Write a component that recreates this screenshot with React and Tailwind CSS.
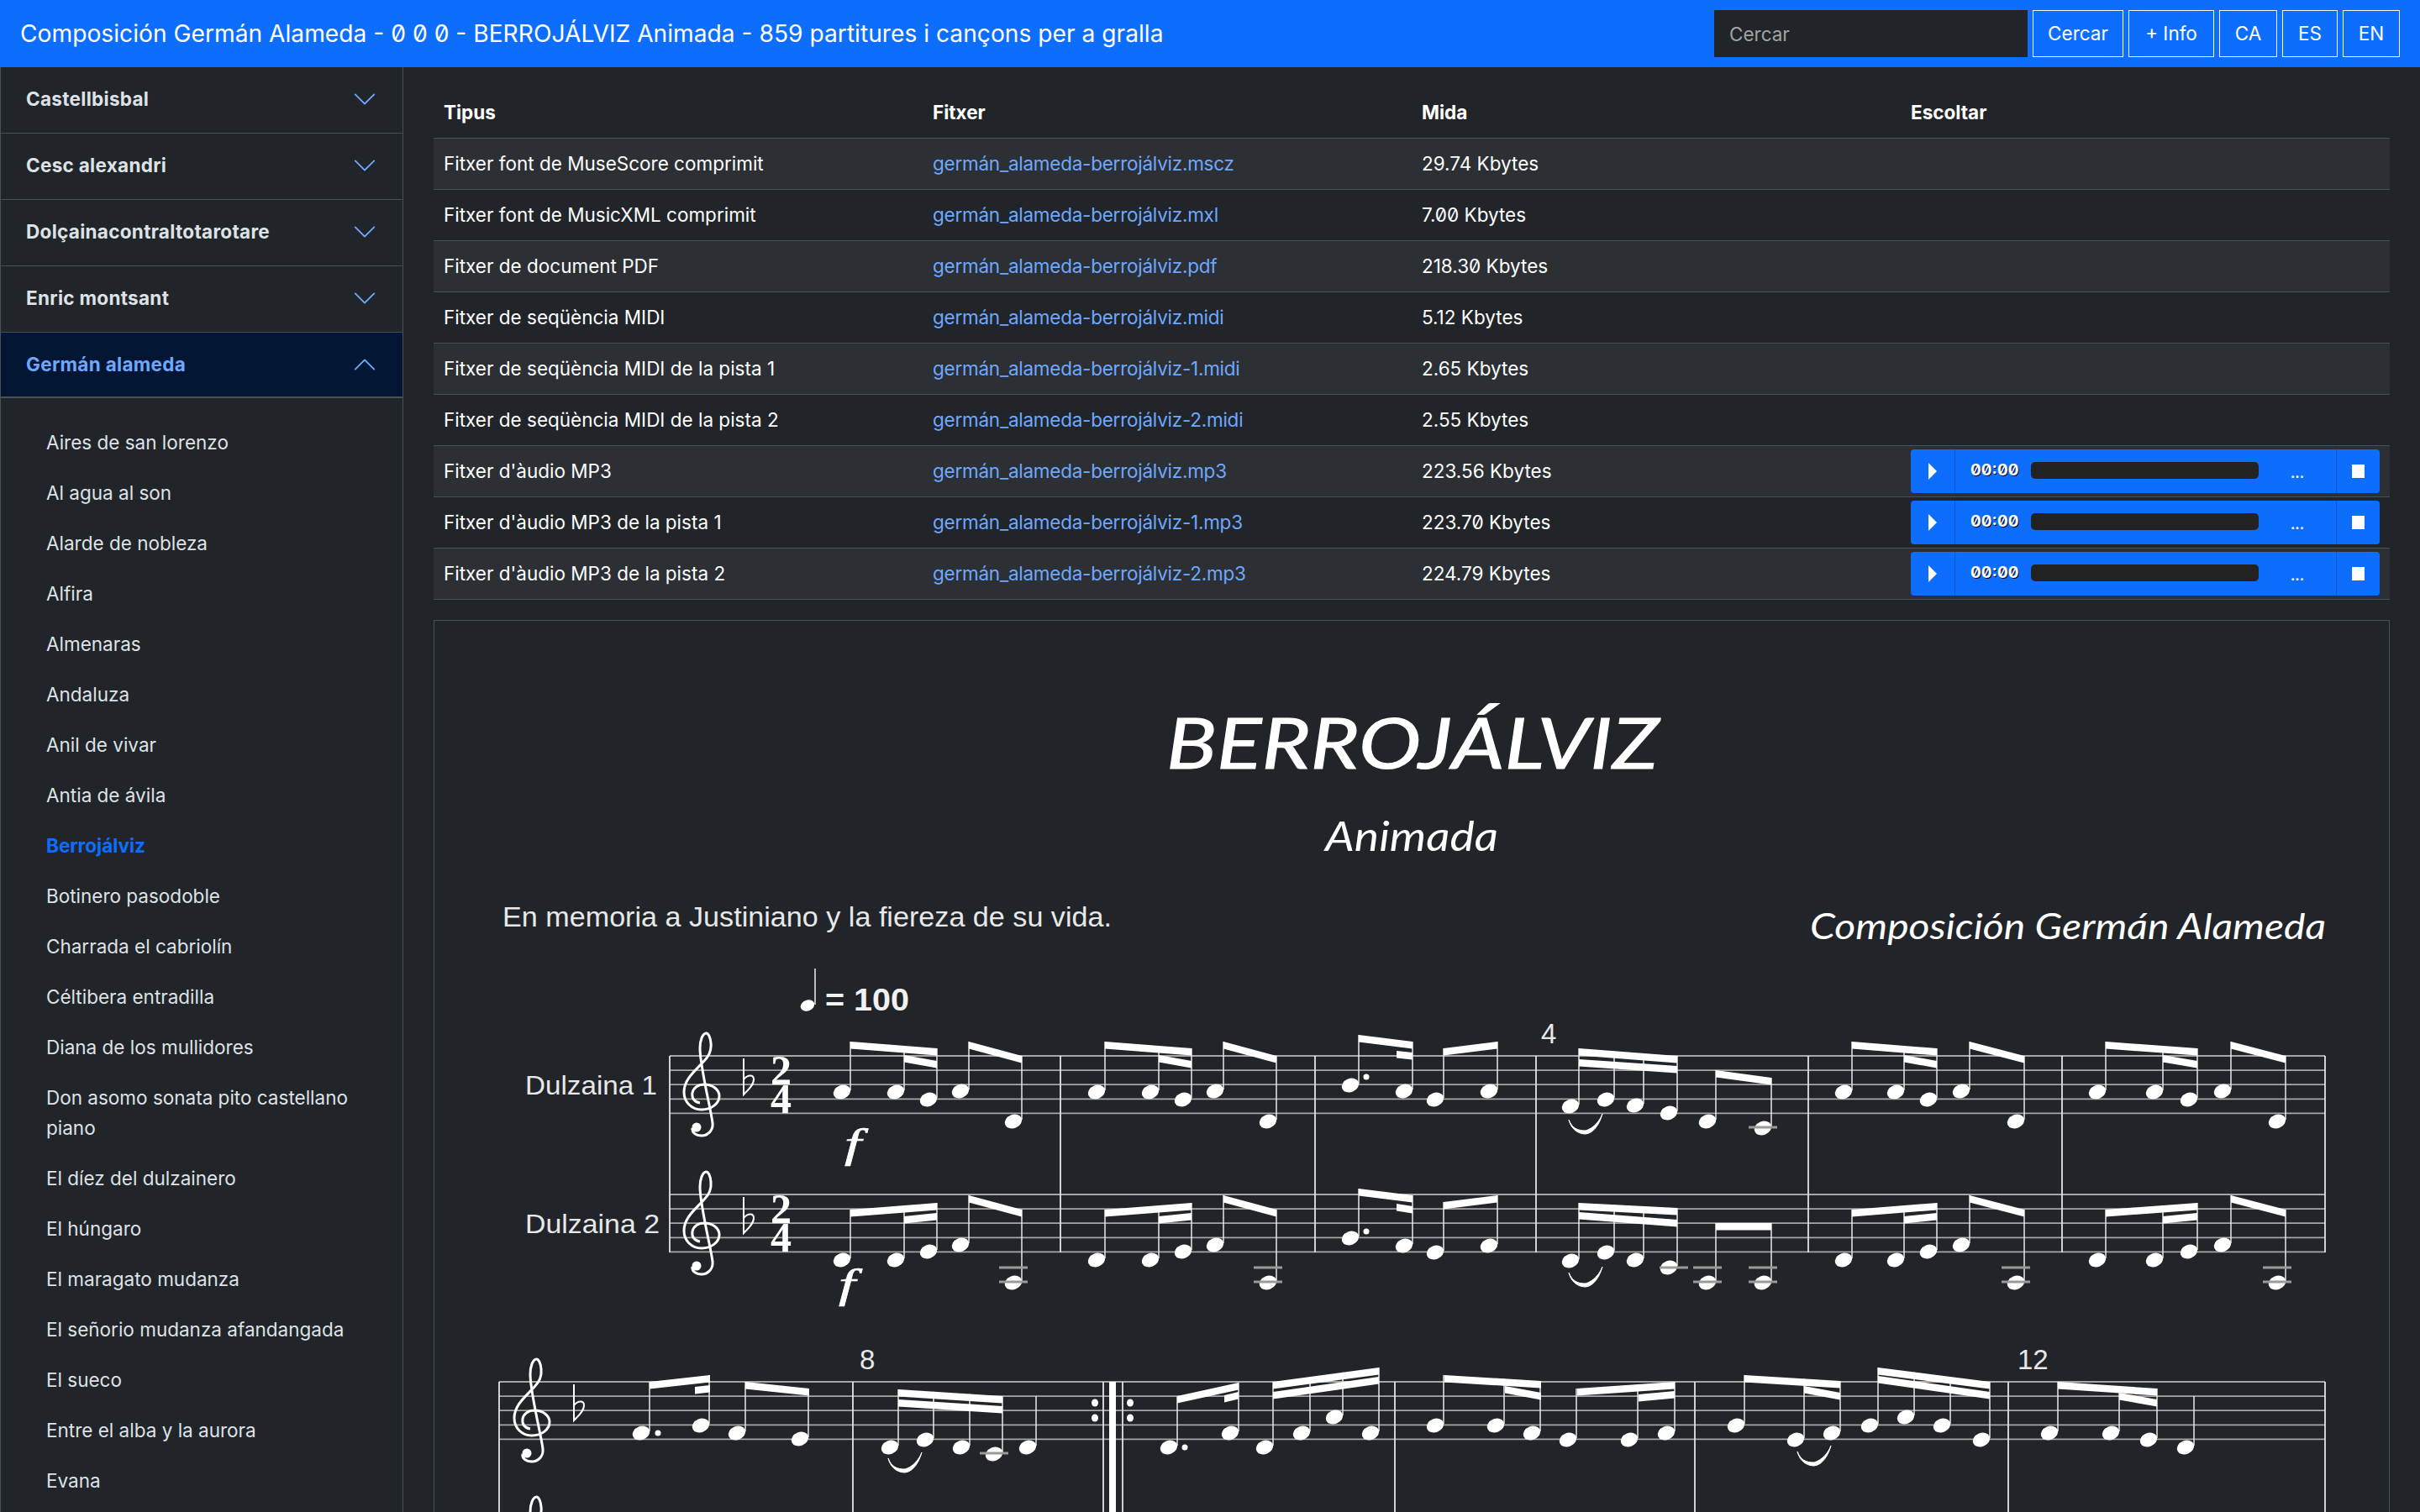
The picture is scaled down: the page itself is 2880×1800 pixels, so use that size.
import { useState } from 'react'

const songs = [
  'Aires de san lorenzo', 'Al agua al son', 'Alarde de nobleza', 'Alfira', 'Almenaras', 'Andaluza',
  'Anil de vivar', 'Antia de ávila', 'Berrojálviz', 'Botinero pasodoble', 'Charrada el cabriolín',
  'Céltibera entradilla', 'Diana de los mullidores', 'Don asomo sonata pito castellano piano',
  'El díez del dulzainero', 'El húngaro', 'El maragato mudanza', 'El señorio mudanza afandangada',
  'El sueco', 'Entre el alba y la aurora', 'Evana',
]

const files = [
  ['Fitxer font de MuseScore comprimit', 'germán_alameda-berrojálviz.mscz', '29.74 Kbytes'],
  ['Fitxer font de MusicXML comprimit', 'germán_alameda-berrojálviz.mxl', '7.00 Kbytes'],
  ['Fitxer de document PDF', 'germán_alameda-berrojálviz.pdf', '218.30 Kbytes'],
  ['Fitxer de seqüència MIDI', 'germán_alameda-berrojálviz.midi', '5.12 Kbytes'],
  ['Fitxer de seqüència MIDI de la pista 1', 'germán_alameda-berrojálviz-1.midi', '2.65 Kbytes'],
  ['Fitxer de seqüència MIDI de la pista 2', 'germán_alameda-berrojálviz-2.midi', '2.55 Kbytes'],
  ["Fitxer d'àudio MP3", 'germán_alameda-berrojálviz.mp3', '223.56 Kbytes', true],
  ["Fitxer d'àudio MP3 de la pista 1", 'germán_alameda-berrojálviz-1.mp3', '223.70 Kbytes', true],
  ["Fitxer d'àudio MP3 de la pista 2", 'germán_alameda-berrojálviz-2.mp3', '224.79 Kbytes', true],
]

function Chevron({ up, color = '#6ea8fe' }) {
  return (
    <svg viewBox="0 0 16 16" fill={color} className={up ? 'w-[30px] h-[30px] rotate-180' : 'w-[30px] h-[30px]'}>
      <path d="M1.646 4.646a.5.5 0 0 1 .708 0L8 10.293l5.646-5.647a.5.5 0 0 1 .708.708l-6 6a.5.5 0 0 1-.708 0l-6-6a.5.5 0 0 1 0-.708z" />
    </svg>
  )
}

function Player() {
  return (
    <div className="flex items-center h-[52px] w-[558px] rounded-[4px] bg-[#0d6efd] text-white">
      <div className="w-[53px] h-full flex items-center justify-center border-r border-[#0a58ca]">
        <svg viewBox="0 0 10 20" className="w-[10px] h-[20px]" fill="#fff"><path d="M0 0 L10 10 L0 20 Z" /></svg>
      </div>
      <span className="ml-[18px] w-[57px] text-[19px] leading-none font-bold -mt-[3px] [text-shadow:1px_1px_0_#000]">00:00</span>
      <div className="ml-[15px] w-[271px] h-[20px] rounded-[5px] bg-[#222] -mt-[3px]" />
      <span className="ml-[38px] w-[40px] text-[16px] font-bold leading-none mt-[4px]">...</span>
      <div className="ml-auto w-[52px] h-full flex items-center justify-center border-l border-[#0a58ca]">
        <div className="w-[15px] h-[16px] bg-white" />
      </div>
    </div>
  )
}

/* ---- score drawing, coordinates are page pixels ---- */
const THICK = 8.5

function Head({ x, y }) {
  return <ellipse cx={x} cy={y} rx="10.5" ry="8" transform={`rotate(-22 ${x} ${y})`} fill="#fff" />
}

function Beam({ b }) {
  const [x1, y1, x2, y2] = b
  return <polygon points={`${x1},${y1} ${x2},${y2} ${x2},${y2 + THICK} ${x1},${y1 + THICK}`} fill="#fff" />
}

function Group({ heads, beam, extra = [], stemTop }) {
  return (
    <g>
      {heads.map(([x, y], i) => {
        const sx = x + 10
        let top = stemTop
        if (beam) {
          const [x1, y1, x2, y2] = beam
          top = y1 + ((sx - x1) / (x2 - x1)) * (y2 - y1)
        }
        return (
          <g key={i}>
            <line x1={sx} y1={top} x2={sx} y2={y - 2} stroke="#e8e8e8" strokeWidth="1.5" />
            <Head x={x} y={y} />
          </g>
        )
      })}
      {beam && <Beam b={beam} />}
      {extra.map((b, i) => <Beam key={i} b={b} />)}
    </g>
  )
}

function Staff({ x1, x2, y }) {
  return (
    <g stroke="#a4a6a8" strokeWidth="1.8">
      {[0, 1, 2, 3, 4].map((i) => (
        <line key={i} x1={x1} x2={x2} y1={y + i * 17.1} y2={y + i * 17.1} />
      ))}
    </g>
  )
}

function Clef({ x, y }) {
  return (
    <g transform={`translate(${x} ${y})`}>
      <path
        d="M19 83 C12 82 9 77 10 71 C11 65 17 61 24 61 C34 61 42 67 42 75 C42 84 32 91 21 91 C9 91 0 82 0 70 C0 55 13 45 24 33 C30 27 33 21 32 12 C31.5 5 29 0 26.5 0 C22 0 19 9 19 18 C19 40 33 95 34 107 C35 116 28 122 21 122 C14 122 9 118 10 113"
        fill="none" stroke="#fff" strokeWidth="3"
      />
      <circle cx="15" cy="112" r="5.5" fill="#fff" />
    </g>
  )
}

function Flat({ x, y }) {
  return (
    <path
      transform={`translate(${x} ${y})`}
      d="M1 0 L1 43 C6 38 13 32 13 25 C13 19 6 19 1 25"
      fill="none" stroke="#fff" strokeWidth="2"
    />
  )
}

function Slur({ x, y }) {
  return (
    <path
      transform={`translate(${x} ${y})`}
      d="M0 7 C4 17 10 20 20 20 C30 17 37 8 40 0 C37 11 30 23 20 24 C9 24 2 16 0 7 Z"
      fill="#fff" stroke="#fff" strokeWidth="1"
    />
  )
}

function Ledger({ x, y }) {
  return <line x1={x - 17} x2={x + 17} y1={y} y2={y} stroke="#9a9a9a" strokeWidth="3" />
}

function MeasureTop({ x0, s }) {
  const h = s.map((d) => x0 + d)
  return (
    <g>
      <Group
        heads={[[h[0], 1300], [h[1], 1300], [h[2], 1309]]}
        beam={[h[0] + 10, 1240, h[2] + 10, 1248]}
        extra={[[h[1] + 10, 1256, h[2] + 10, 1263]]}
      />
      <Group heads={[[h[3], 1299], [h[4], 1335]]} beam={[h[3] + 10, 1240, h[4] + 10, 1257]} />
    </g>
  )
}

function MeasureBottom({ x0, s }) {
  const h = s.map((d) => x0 + d)
  return (
    <g>
      <Group
        heads={[[h[0], 1500], [h[1], 1500], [h[2], 1490]]}
        beam={[h[0] + 10, 1440, h[2] + 10, 1432]}
        extra={[[h[1] + 10, 1448, h[2] + 10, 1444]]}
      />
      <Group heads={[[h[3], 1482], [h[4], 1527]]} beam={[h[3] + 10, 1423, h[4] + 10, 1440]} />
      <Ledger x={h[4]} y={1509} />
      <Ledger x={h[4]} y={1526} />
    </g>
  )
}

function Score() {
  const sansFont = 'Liberation Sans, sans-serif'
  const serifFont = 'Liberation Serif, serif'
  const handFont = 'Lato, sans-serif'
  const a = [0, 64, 103, 141, 204]
  const b = [0, 62, 101, 140, 205]
  const c = [0, 68, 109, 149, 214]

  return (
    <svg viewBox="517 739 2326 1061" className="block w-[2326px] h-[1061px]">
      <text x="1388" y="915" fontFamily={handFont} fontStyle="italic" fontSize="84" stroke="#fff" strokeWidth="1" fill="#fff" textLength="586" lengthAdjust="spacingAndGlyphs">BERROJÁLVIZ</text>
      <text x="1577" y="1013" fontFamily={handFont} fontStyle="italic" fontSize="48" fill="#fff" textLength="206" lengthAdjust="spacingAndGlyphs">Animada</text>
      <text x="2154" y="1118" fontFamily={handFont} fontStyle="italic" fontSize="42" fill="#fff" textLength="614" lengthAdjust="spacingAndGlyphs">Composición Germán Alameda</text>
      <text x="598" y="1103" fontFamily={sansFont} fontSize="34" fill="#e8e8e8" textLength="725" lengthAdjust="spacingAndGlyphs">En memoria a Justiniano y la fiereza de su vida.</text>

      {/* tempo */}
      <line x1="970" x2="970" y1="1153" y2="1196" stroke="#eee" strokeWidth="1.5" />
      <ellipse cx="961" cy="1197" rx="8.5" ry="6.5" transform="rotate(-22 961 1197)" fill="#fff" />
      <text x="982" y="1203" fontFamily={sansFont} fontWeight="700" fontSize="36" fill="#f2f2f2" textLength="100" lengthAdjust="spacingAndGlyphs">= 100</text>

      {/* first system */}
      <text x="625" y="1303" fontFamily={sansFont} fontSize="32" fill="#e8e8e8" textLength="157" lengthAdjust="spacingAndGlyphs">Dulzaina 1</text>
      <text x="625" y="1468" fontFamily={sansFont} fontSize="32" fill="#e8e8e8" textLength="160" lengthAdjust="spacingAndGlyphs">Dulzaina 2</text>
      <Staff x1={797} x2={2767} y={1257} />
      <Staff x1={797} x2={2767} y={1422} />
      {[797, 1262, 1565, 1828, 2152, 2454, 2767].map((x) => (
        <line key={x} x1={x} x2={x} y1={1257} y2={1491} stroke="#e4e4e4" strokeWidth="1.8" />
      ))}
      <Clef x={814} y={1230} />
      <Clef x={814} y={1395} />
      <Flat x={884} y={1260} />
      <Flat x={884} y={1425} />
      {[0, 165].map((dy) => (
        <text key={dy} fontFamily={serifFont} fontWeight="700" fontSize="50" fill="#fff">
          <tspan x="917" y={1291 + dy}>2</tspan>
          <tspan x="917" y={1325 + dy}>4</tspan>
        </text>
      ))}
      <text x="1005" y="1378" fontFamily={serifFont} fontStyle="italic" fontWeight="400" fontSize="48" fill="#fff" stroke="#fff" strokeWidth="0.6" textLength="20" lengthAdjust="spacingAndGlyphs">f</text>
      <text x="998" y="1545" fontFamily={serifFont} fontStyle="italic" fontWeight="400" fontSize="48" fill="#fff" stroke="#fff" strokeWidth="0.6" textLength="20" lengthAdjust="spacingAndGlyphs">f</text>

      <MeasureTop x0={1002} s={a} />
      <MeasureTop x0={1305} s={a} />
      <MeasureTop x0={2194} s={b} />
      <MeasureTop x0={2496} s={c} />
      <MeasureBottom x0={1002} s={a} />
      <MeasureBottom x0={1305} s={a} />
      <MeasureBottom x0={2194} s={b} />
      <MeasureBottom x0={2496} s={c} />

      {/* measure 3 */}
      <Group heads={[[1607, 1292], [1671, 1299]]} beam={[1617, 1232, 1681, 1240]} extra={[[1662, 1251, 1681, 1253]]} />
      <circle cx="1626" cy="1282" r="3.5" fill="#fff" />
      <Group heads={[[1708, 1309], [1772, 1299]]} beam={[1718, 1248, 1782, 1240]} />
      <Group heads={[[1607, 1474], [1671, 1483]]} beam={[1617, 1415, 1681, 1423]} extra={[[1662, 1433, 1681, 1436]]} />
      <circle cx="1626" cy="1466" r="3.5" fill="#fff" />
      <Group heads={[[1708, 1491], [1772, 1483]]} beam={[1718, 1431, 1782, 1423]} />

      {/* measure 4 */}
      <text x="1834" y="1242" fontFamily={sansFont} fontSize="33" fill="#e8e8e8">4</text>
      <Group heads={[[1869, 1317], [1911, 1309], [1946, 1316], [1986, 1325]]} beam={[1879, 1248, 1996, 1257]} extra={[[1879, 1261, 1996, 1269]]} />
      <Group heads={[[2032, 1335], [2098, 1343]]} beam={[2042, 1274, 2108, 1283]} />
      <Ledger x={2098} y={1342} />
      <Slur x={1867} y={1326} />
      <Group heads={[[1869, 1501], [1911, 1491], [1946, 1500], [1986, 1509]]} beam={[1879, 1432, 1996, 1438]} extra={[[1879, 1443, 1996, 1452]]} />
      <Group heads={[[2032, 1527], [2098, 1527]]} beam={[2042, 1456, 2108, 1456]} />
      <Ledger x={1992} y={1509} />
      <Ledger x={2032} y={1509} />
      <Ledger x={2098} y={1509} />
      <Ledger x={2032} y={1526} />
      <Ledger x={2098} y={1526} />
      <Slur x={1867} y={1508} />

      {/* second system */}
      <Staff x1={594} x2={2767} y={1645} />
      {[594, 1015, 1313, 1336, 1660, 2017, 2390].map((x) => (
        <line key={x} x1={x} x2={x} y1={1645} y2={1800} stroke="#e4e4e4" strokeWidth="1.8" />
      ))}
      <line x1={2767} x2={2767} y1={1645} y2={1800} stroke="#e4e4e4" strokeWidth="1.8" />
      <rect x="1320" y="1645" width="8" height="155" fill="#fff" />
      {[[1303, 1670], [1303, 1688], [1345, 1670], [1345, 1688]].map(([x, y]) => (
        <ellipse key={`${x}-${y}`} cx={x} cy={y} rx="4" ry="4.5" fill="#fff" />
      ))}
      <Clef x={612} y={1618} />
      <Clef x={612} y={1782} />
      <Flat x={682} y={1648} />
      <text x="1023" y="1630" fontFamily={sansFont} fontSize="33" fill="#e8e8e8">8</text>
      <text x="2401" y="1630" fontFamily={sansFont} fontSize="33" fill="#e8e8e8">12</text>

      <Group heads={[[763, 1706], [834, 1697]]} beam={[773, 1645, 845, 1637]} extra={[[827, 1651, 845, 1649]]} />
      <circle cx="783" cy="1706" r="3.5" fill="#fff" />
      <Group heads={[[877, 1706], [952, 1713]]} beam={[887, 1645, 963, 1653]} />

      <Group heads={[[1059, 1723], [1101, 1714], [1144, 1723], [1183, 1731]]} beam={[1069, 1654, 1193, 1662]} extra={[[1069, 1666, 1193, 1674]]} />
      <Ledger x={1183} y={1730} />
      <Group heads={[[1223, 1723]]} stemTop={1662} />
      <Slur x={1057} y={1729} />

      <Group heads={[[1391, 1723], [1464, 1706]]} beam={[1401, 1662, 1474, 1646]} extra={[[1457, 1661, 1474, 1657]]} />
      <circle cx="1410" cy="1723" r="3.5" fill="#fff" />
      <Group heads={[[1505, 1723], [1549, 1706], [1588, 1687], [1631, 1706]]} beam={[1515, 1645, 1641, 1628]} extra={[[1515, 1657, 1641, 1639]]} />

      <Group heads={[[1708, 1697], [1780, 1697], [1823, 1706]]} beam={[1719, 1637, 1834, 1644]} extra={[[1791, 1650, 1834, 1658]]} />
      <Group heads={[[1866, 1714], [1939, 1714], [1983, 1706]]} beam={[1877, 1653, 1993, 1645]} extra={[[1950, 1660, 1993, 1656]]} />

      <Group heads={[[2066, 1697], [2137, 1714], [2180, 1706]]} beam={[2076, 1637, 2190, 1644]} extra={[[2147, 1650, 2190, 1658]]} />
      <Slur x={2139} y={1721} />
      <Group heads={[[2225, 1697], [2268, 1687], [2311, 1697], [2358, 1714]]} beam={[2235, 1628, 2368, 1645]} extra={[[2235, 1638, 2368, 1657]]} />

      <Group heads={[[2439, 1706], [2512, 1706], [2557, 1714]]} beam={[2449, 1645, 2567, 1653]} extra={[[2522, 1658, 2567, 1666]]} />
      <Group heads={[[2601, 1723]]} stemTop={1662} />
    </svg>
  )
}

const groups = ['Castellbisbal', 'Cesc alexandri', 'Dolçainacontraltotarotare', 'Enric montsant']

export default function App() {
  const [query, setQuery] = useState('')

  return (
    <div className="h-screen overflow-hidden flex flex-col bg-[#212529] text-white font-[Inter,sans-serif] text-[22.5px] leading-[36px] slashed-zero">
      {/* HEADER */}
      <header className="h-[80px] shrink-0 bg-[#0d6efd] flex items-center pl-[24px] pr-[24px]">
        <span className="flex-1 text-[28.2px] leading-[40px]">Composición Germán Alameda - 0 0 0 - BERROJÁLVIZ Animada - 859 partitures i cançons per a gralla</span>
        <input
          value={query}
          onChange={(e) => setQuery(e.target.value)}
          placeholder="Cercar"
          className="w-[373px] h-[56px] px-[18px] bg-[#212529] text-white placeholder:text-[#a0a3a6] outline-none"
        />
        <div className="flex gap-[6px] ml-[6px]">
          <button className="h-[56px] w-[108px] border border-white">Cercar</button>
          <button className="h-[56px] w-[102px] border border-white">+ Info</button>
          <button className="h-[56px] w-[69px] border border-white">CA</button>
          <button className="h-[56px] w-[66px] border border-white">ES</button>
          <button className="h-[56px] w-[68px] border border-white">EN</button>
        </div>
      </header>

      <div className="flex flex-1 min-h-0">
        {/* SIDEBAR */}
        <aside className="w-[480px] shrink-0 border-r border-l border-[#495057] overflow-hidden">
          {groups.map((g) => (
            <div key={g} className="h-[79px] border-b border-[#495057] flex items-center justify-between pl-[30px] pr-[30px] pb-[2px] font-bold tracking-[0.3px] text-[#dee2e6]">
              <span>{g}</span>
              <Chevron />
            </div>
          ))}
          <div className="h-[78px] bg-[#031633] border-b-2 border-[#495057] flex items-center justify-between pl-[30px] pr-[30px] font-bold tracking-[0.3px] text-[#6ea8fe]">
            <span>Germán alameda</span>
            <Chevron up />
          </div>
          <ul className="pt-[23px] pl-[54px] pr-[30px] text-[#dee2e6]">
            {songs.map((s) => (
              <li key={s} className={s === 'Berrojálviz' ? 'py-[12px] font-bold text-[#0d6efd]' : 'py-[12px]'}>{s}</li>
            ))}
          </ul>
        </aside>

        {/* MAIN */}
        <main className="flex-1 min-w-0 overflow-hidden pt-[24px] pl-[36px] pr-[36px]">
          <table className="w-[2328px] table-fixed border-collapse">
            <thead>
              <tr className="border-b border-[#495057] text-left">
                <th className="p-[12px] font-bold">Tipus</th>
                <th className="p-[12px] font-bold">Fitxer</th>
                <th className="p-[12px] font-bold">Mida</th>
                <th className="p-[12px] font-bold">Escoltar</th>
              </tr>
            </thead>
            <tbody>
              {files.map(([type, file, size, audio], i) => (
                <tr key={file} className={i % 2 === 0 ? 'bg-[#2c3034] border-b border-[#495057]' : 'border-b border-[#495057]'}>
                  <td className="p-[12px] h-[60px]">{type}</td>
                  <td className="p-[12px]"><a className="text-[#6ea8fe] tracking-[-0.25px]">{file}</a></td>
                  <td className="p-[12px]">{size}</td>
                  <td className="py-[4px] px-[12px]">{audio && <Player />}</td>
                </tr>
              ))}
            </tbody>
          </table>

          <div className="mt-[24px] border border-[#495057] w-[2328px] h-[1200px]">
            <Score />
          </div>
        </main>
      </div>
    </div>
  )
}
